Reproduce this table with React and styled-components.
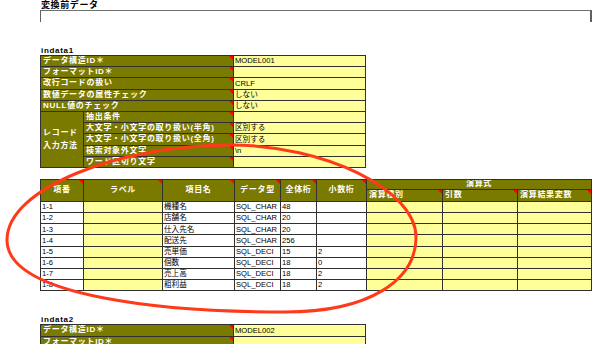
import styled, { createGlobalStyle } from "styled-components";

const GlobalStyle = createGlobalStyle`
  html, body {
    margin: 0;
    padding: 0;
    background: #fff;
  }
  body {
    font-family: "Liberation Sans", "Noto Sans CJK JP", sans-serif;
    overflow: hidden;
  }
`;

const OLIVE = "#7b7a00";
const YELLOW = "#ffff99";

const recordRows = [
  { label: "データ構造ID＊", value: "MODEL001" },
  { label: "フォーマットID＊", value: "" },
  { label: "改行コードの扱い", value: "CRLF" },
  { label: "数値データの属性チェック", value: "しない" },
  { label: "NULL値のチェック", value: "しない" },
];

const inputRows = [
  { label: "抽出条件", value: "" },
  { label: "大文字・小文字の取り扱い(半角)", value: "区別する" },
  { label: "大文字・小文字の取り扱い(全角)", value: "区別する" },
  { label: "検索対象外文字", value: "\\n" },
  { label: "ワード区切り文字", value: "" },
];

const items = [
  ["1-1", "機種名", "SQL_CHAR", "48", ""],
  ["1-2", "店舗名", "SQL_CHAR", "20", ""],
  ["1-3", "仕入先名", "SQL_CHAR", "20", ""],
  ["1-4", "配送先", "SQL_CHAR", "256", ""],
  ["1-5", "売単価", "SQL_DECI", "15", "2"],
  ["1-6", "個数", "SQL_DECI", "18", "0"],
  ["1-7", "売上高", "SQL_DECI", "18", "2"],
  ["1-8", "粗利益", "SQL_DECI", "18", "2"],
];

export default function App() {
  return (
    <>
      <GlobalStyle />
      <Page>
        <Title>変換前データ</Title>
        <MemoBox />

        <Caption $gap={24}>indata1</Caption>
        <SettingsTable model="MODEL001" />

        <Sheet $cols="42px 78px 71px 45px 35px 49px 75px 74px 73px" $rows="9px 11px">
          <Cell $head $center $flag $span={2}>項番</Cell>
          <Cell $head $center $flag $span={2}>ラベル</Cell>
          <Cell $head $center $flag $span={2}>項目名</Cell>
          <Cell $head $center $flag $span={2}>データ型</Cell>
          <Cell $head $center $flag $span={2}>全体桁</Cell>
          <Cell $head $center $flag $span={2}>小数桁</Cell>
          <Cell $head $center $colSpan={3}>演算式</Cell>
          <Cell $head $flag>演算種別</Cell>
          <Cell $head $flag>引数</Cell>
          <Cell $head $flag>演算結果変数</Cell>
          {items.map(([no, name, type, len, dec]) => (
            <Row key={no}>
              <Cell>{no}</Cell>
              <Cell $yellow />
              <Cell>{name}</Cell>
              <Cell>{type}</Cell>
              <Cell>{len}</Cell>
              <Cell>{dec}</Cell>
              <Cell $yellow />
              <Cell $yellow />
              <Cell $yellow />
            </Row>
          ))}
        </Sheet>

        <Caption $gap={24}>indata2</Caption>
        {/* only the top of the second block is on screen */}
        <SettingsTable model="MODEL002" visibleRows={2} />
      </Page>

      <Annotation viewBox="0 0 594 344">
        <path
          d="M7,240 C7,188 120,145 230,145 C325,145 416,190 416,237 C416,280 370,312 285,312 C170,312 7,298 7,240 Z"
          fill="none"
          stroke="#ff3a1a"
          strokeWidth="3"
        />
      </Annotation>
    </>
  );
}

function SettingsTable({ model, visibleRows }) {
  const top = recordRows.slice(0, visibleRows ?? recordRows.length);
  const full = !visibleRows;
  return (
    <Sheet $cols="42px 149px 131px">
      {top.map((r, i) => (
        <Row key={r.label}>
          <Cell $head $flag $colSpan={2}>{r.label}</Cell>
          <Cell $yellow>{i === 0 ? model : r.value}</Cell>
        </Row>
      ))}
      {full && (
        <>
          <Cell $head $span={5}>
            <Stack>
              <span>レコード</span>
              <span>入力方法</span>
            </Stack>
          </Cell>
          {inputRows.map((r) => (
            <Row key={r.label}>
              <Cell $head $flag>{r.label}</Cell>
              <Cell $yellow>{r.value}</Cell>
            </Row>
          ))}
        </>
      )}
    </Sheet>
  );
}

const Page = styled.div`
  width: 552px;
  padding: 1px 0 0 40px;
`;

const Title = styled.div`
  font-size: 9px;
  line-height: 9px;
  font-weight: bold;
  letter-spacing: 0.6px;
  padding-left: 1px;
`;

const MemoBox = styled.div`
  box-sizing: border-box;
  width: 552px;
  height: 12px;
  border-top: 1px solid #707070;
  border-left: 1px solid #606060;
  border-right: 2px solid #606060;
`;

const Caption = styled.div`
  margin-top: ${(p) => p.$gap ?? 23}px;
  height: 9px;
  font-size: 8px;
  line-height: 9px;
  font-weight: bold;
  letter-spacing: 0.7px;
  padding-left: 1px;
`;

const Sheet = styled.div`
  display: grid;
  grid-template-columns: ${(p) => p.$cols};
  grid-template-rows: ${(p) => p.$rows ?? "none"};
  grid-auto-rows: 10.2px;
  gap: 1px;
  padding: 1px;
  width: fit-content;
  background: #303030;
  & + & {
    margin-top: 11px;
  }
`;

const Row = styled.div`
  display: contents;
`;

const Cell = styled.div`
  position: relative;
  display: flex;
  align-items: center;
  justify-content: ${(p) => (p.$center ? "center" : "flex-start")};
  padding: 0 ${(p) => (p.$head ? "2px" : "1px")};
  overflow: hidden;
  white-space: nowrap;
  font-size: ${(p) => (p.$head ? "8px" : "7.6px")};
  line-height: 1;
  letter-spacing: ${(p) => (p.$head ? "0.7px" : "0")};
  font-weight: ${(p) => (p.$head ? "bold" : "normal")};
  color: ${(p) => (p.$head ? "#fff" : "#000")};
  background: ${(p) => (p.$head ? OLIVE : p.$yellow ? YELLOW : "#fff")};
  grid-row: ${(p) => (p.$span ? `span ${p.$span}` : "auto")};
  grid-column: ${(p) => (p.$colSpan ? `span ${p.$colSpan}` : "auto")};

  &::after {
    content: "";
    display: ${(p) => (p.$flag ? "block" : "none")};
    position: absolute;
    top: 0;
    right: 0;
    border-top: 4px solid #ff0000;
    border-left: 4px solid transparent;
  }
`;

const Stack = styled.div`
  display: flex;
  flex-direction: column;
  gap: 5px;
`;

const Annotation = styled.svg`
  position: absolute;
  top: 0;
  left: 0;
  width: 594px;
  height: 344px;
  pointer-events: none;
`;
